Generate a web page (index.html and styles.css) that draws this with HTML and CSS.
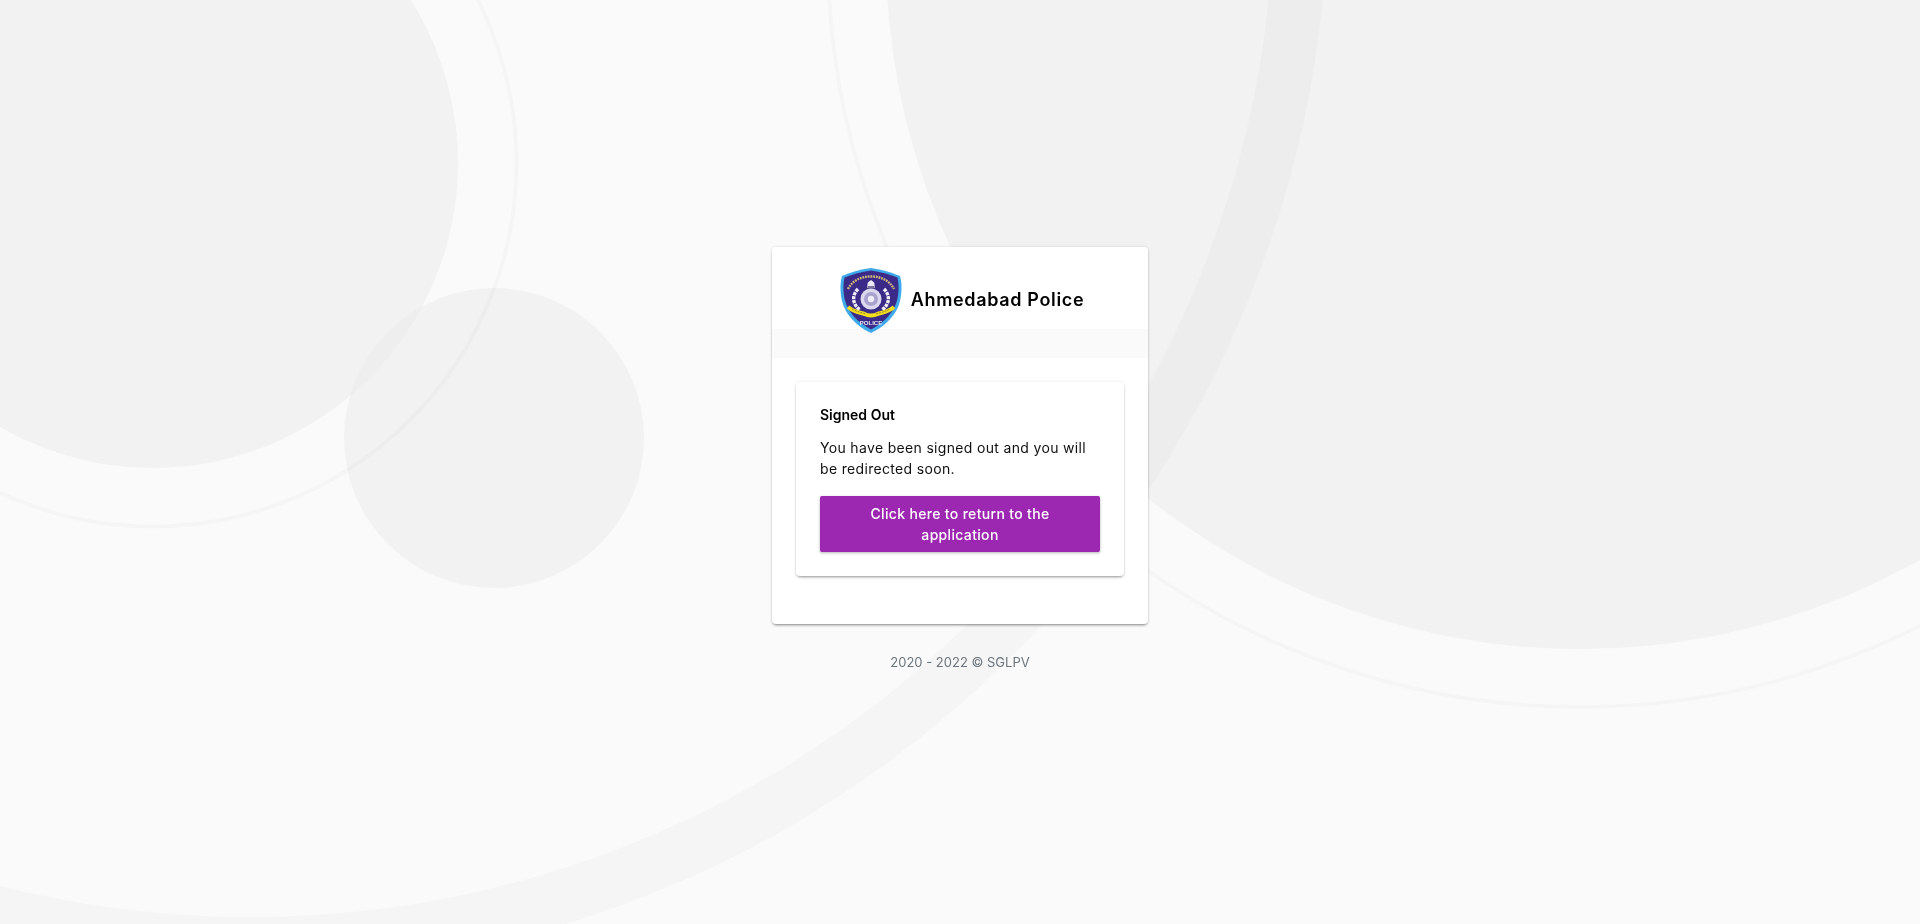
FILE: index.html
```html
<!DOCTYPE html>
<html lang="en">
<head>
<meta charset="utf-8">
<title>Ahmedabad Police</title>
<link rel="stylesheet" href="styles.css">
</head>
<body>
<svg class="backdrop" viewBox="0 0 1920 924" aria-hidden="true">
  <defs>
    <clipPath id="leftClip"><circle cx="153" cy="163" r="305"/></clipPath>
  </defs>
  <circle class="disc" cx="153" cy="163" r="305"/>
  <circle class="disc" cx="494" cy="438" r="150"/>
  <circle class="lens" cx="494" cy="438" r="150" clip-path="url(#leftClip)"/>
  <circle class="disc" cx="1580" cy="-45" r="694"/>
  <circle class="thin" cx="153" cy="163" r="363.5"/>
  <circle class="thin" cx="1580" cy="-45" r="752"/>
  <circle class="band" cx="251" cy="-106" r="1050"/>
</svg>

<main class="page">
  <section class="panel">
    <header class="brand">
      <svg class="crest" viewBox="0 0 62 66" role="img" aria-label="Ahmedabad Police crest">
        <defs>
          <filter id="soft" x="-5%" y="-5%" width="110%" height="110%"><feGaussianBlur stdDeviation="0.45"/></filter>
          <path id="crestArc" d="M8 22C13 13 21 9.500 31 9.500C41 9.500 49 13 54 22"/>
        </defs>
        <g filter="url(#soft)">
          <path fill="#3fa9ea" d="M31 1C41 2.500 51 5 60 9C62 16 62 25 60 34C57 47 46 59 31 66C16 59 5 47 2 34C0 25 0 16 2 9C11 5 21 2.500 31 1Z"/>
          <path fill="#3b2c88" d="M31 3.500C40.500 5 49 7 57.500 10.500C59 17 59 25 57 33.500C54 45 44 56 31 62.500C18 56 8 45 5 33.500C3 25 3 17 4.500 10.500C13 7 21.500 5 31 3.500Z"/>
          <use href="#crestArc" fill="none" stroke="#d3b979" stroke-width="2.400" stroke-dasharray="1.800 .9"/>
          <path fill="#eceaf5" d="M27 21l.8-5.500 3.200-2.500 3.200 2.500.8 5.500z"/>
          <path fill="#77709f" d="M27.500 19h7v2.500h-7z"/>
          <g fill="none" stroke="#f1eff9" stroke-width="3.400" stroke-dasharray="3.200 .9">
            <path d="M18 22C11 29 13 38 20 43"/>
            <path d="M44 22C51 29 49 38 42 43"/>
          </g>
          <circle cx="31" cy="32" r="10.500" fill="#dcd9ee"/>
          <circle cx="31" cy="32" r="7" fill="#a9a4cf"/>
          <circle cx="31" cy="32" r="3.200" fill="#efedf8"/>
          <path fill="none" stroke="#f3de1f" stroke-width="4" d="M8 40C14 45 20 45.500 24.500 47C28 49 34 49 37.500 47C42 45.500 48 45 54 40"/>
          <path fill="none" stroke="#7c7130" stroke-width=".8" stroke-dasharray="2 1" d="M12 42C17 45 22 45.500 26 47M36 47C40 45.500 45 45 50 42"/>
          <text class="crest-word" x="31" y="58" text-anchor="middle">POLICE</text>
        </g>
      </svg>
      <h1 class="brand-name">Ahmedabad Police</h1>
    </header>
    <div class="strip"></div>
    <div class="panel-body">
      <div class="notice">
        <h2 class="notice-title">Signed Out</h2>
        <p class="notice-text">You have been signed out and you will be redirected soon.</p>
        <a class="return-button" href="#">Click here to return to the application</a>
      </div>
    </div>
  </section>
  <footer class="copyright">2020 - 2022 © SGLPV</footer>
</main>
</body>
</html>
```
FILE: styles.css
```css
* {
  box-sizing: border-box;
}

html,
body {
  margin: 0;
  height: 100%;
}

body {
  background: #fafafa;
  color: #111;
  font-family: Inter, "Noto Sans", "Liberation Sans", sans-serif;
  font-size: 14px;
  line-height: 21px;
  overflow: hidden;
}

.backdrop {
  position: fixed;
  inset: 0;
  width: 1920px;
  height: 924px;
}

.disc {
  fill: #f2f2f2;
}

.lens {
  fill: #eeeeee;
}

.thin {
  fill: none;
  stroke: rgba(0, 0, 0, 0.018);
  stroke-width: 4;
}

.band {
  fill: none;
  stroke: rgba(0, 0, 0, 0.02);
  stroke-width: 54;
}

.page {
  position: relative;
  display: flex;
  flex-direction: column;
  align-items: center;
  padding-top: 247px;
}

.panel {
  width: 376px;
  background: #fff;
  border-radius: 4px;
  box-shadow: 0 2px 3px -1px rgba(0, 0, 0, 0.45), 0 0 3px rgba(0, 0, 0, 0.12);
}

.brand {
  display: flex;
  justify-content: center;
  align-items: center;
  gap: 9px;
  height: 82px;
  padding: 20px 0 0 4px;
}

.crest {
  position: relative;
  flex: none;
  width: 62px;
  height: 66px;
  margin-bottom: -4px;
}

.crest-word {
  fill: #e8e6f4;
  font-family: "Liberation Sans", sans-serif;
  font-size: 6px;
  font-weight: 700;
}

.brand-name {
  margin: 0;
  padding-top: 3px;
  color: #000;
  font-size: 18px;
  font-weight: 600;
  letter-spacing: 0.65px;
  line-height: 24px;
}

.strip {
  height: 29px;
  background: #fafafa;
}

.panel-body {
  padding: 24px 24px 48px;
}

.notice {
  padding: 24px;
  background: #fff;
  border-radius: 4px;
  box-shadow: 0 2px 3px -1px rgba(0, 0, 0, 0.4), 0 0 3px rgba(0, 0, 0, 0.1);
}

.notice-title {
  margin: 0 0 13px;
  color: #000;
  font-size: 14px;
  font-weight: 600;
  line-height: 18px;
}

.notice-text {
  margin: 0 0 17px;
  letter-spacing: 0.33px;
}

.return-button {
  display: block;
  padding: 7px 12px;
  background: #9c27b0;
  border-radius: 2px;
  box-shadow: 0 1px 3px rgba(0, 0, 0, 0.3);
  color: #fff;
  font-weight: 500;
  letter-spacing: 0.33px;
  text-align: center;
  text-decoration: none;
}

.copyright {
  margin-top: 28px;
  color: #6c757d;
  font-size: 13px;
  line-height: 20px;
}
```
